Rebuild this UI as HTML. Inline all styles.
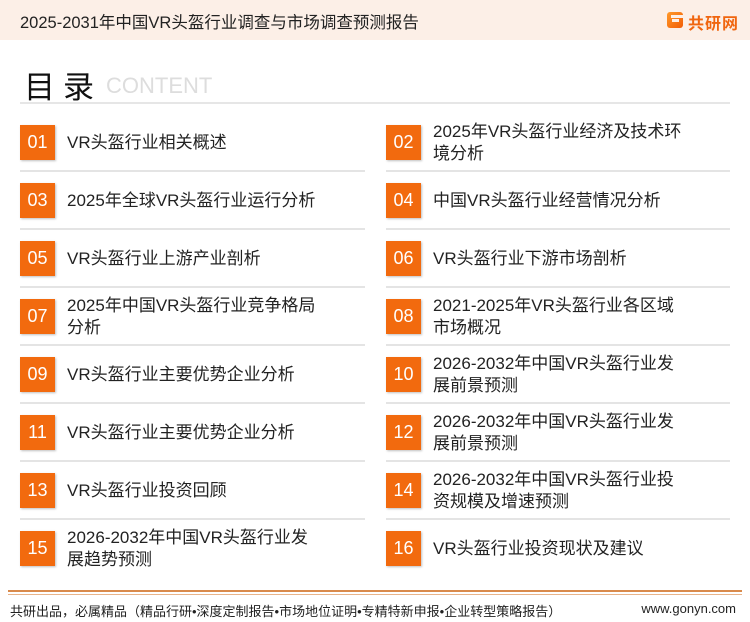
<!DOCTYPE html>
<html><head><meta charset="utf-8"><style>
*{margin:0;padding:0;box-sizing:border-box}
body{width:750px;height:622px;background:#fff;position:relative;overflow:hidden;font-family:"Liberation Sans","Noto Sans CJK SC",sans-serif;color:#222}
.hdr{position:absolute;left:0;top:0;width:750px;height:40px;background:#fcefe7}
.hdr .t{position:absolute;left:20px;top:9px;font-size:16.5px;color:#222}
.logo{position:absolute;left:667px;top:12px;width:16px;height:16px;border-radius:3px;background:linear-gradient(135deg,#ff9a2a,#f25c05)}
.logo:after{content:"";position:absolute;left:5px;top:7px;width:7px;height:3px;background:#fcefe7}
.logo:before{content:"";position:absolute;left:4px;top:3px;width:12px;height:3px;background:#fcefe7}
.lt{position:absolute;left:688px;top:10px;font-size:16px;font-weight:bold;color:#f0650f;letter-spacing:1px}
.ml{position:absolute;left:24px;top:62px;font-size:31px;color:#111;letter-spacing:8px}
.ct{position:absolute;left:106px;top:73px;font-size:22px;color:#ddd}
.hl{position:absolute;left:20px;top:102px;width:710px;height:2px;background:#e6e6e6}
.row{position:absolute;height:58px}
.box{position:absolute;left:0;top:22px;width:35px;height:35px;background:#f26a0e;color:#fff;font-size:18px;line-height:35px;text-align:center;box-shadow:1px 1px 2px rgba(0,0,0,.25)}
.txt{position:absolute;left:47px;font-size:17px;line-height:22px;color:#222;white-space:nowrap}
.dv{position:absolute;left:0;height:2px;background:#e4e4e4}
.f1{position:absolute;left:8px;top:590px;width:734px;height:2px;background:#d98a4c}
.f2{position:absolute;left:8px;top:594px;width:734px;height:1px;background:#e8b48a}
.ft{position:absolute;left:10px;top:601px;font-size:13px;color:#222}
.fu{position:absolute;right:14px;top:601px;font-size:13px;color:#222}
</style></head><body>
<div class="hdr"><div class="t">2025-2031年中国VR头盔行业调查与市场调查预测报告</div><div class="logo"></div><div class="lt">共研网</div></div>
<div class="ml">目录</div><div class="ct">CONTENT</div>
<div class="hl"></div>

<div class="row" style="left:20px;top:103px;width:345px"><div class="box">01</div><div class="txt" style="top:29px">VR头盔行业相关概述</div><div class="dv" style="width:345px;top:67px"></div></div>
<div class="row" style="left:386px;top:103px;width:344px"><div class="box">02</div><div class="txt" style="top:18px">2025年VR头盔行业经济及技术环<br>境分析</div><div class="dv" style="width:344px;top:67px"></div></div>

<div class="row" style="left:20px;top:161px;width:345px"><div class="box">03</div><div class="txt" style="top:29px">2025年全球VR头盔行业运行分析</div><div class="dv" style="width:345px;top:67px"></div></div>
<div class="row" style="left:386px;top:161px;width:344px"><div class="box">04</div><div class="txt" style="top:29px">中国VR头盔行业经营情况分析</div><div class="dv" style="width:344px;top:67px"></div></div>

<div class="row" style="left:20px;top:219px;width:345px"><div class="box">05</div><div class="txt" style="top:29px">VR头盔行业上游产业剖析</div><div class="dv" style="width:345px;top:67px"></div></div>
<div class="row" style="left:386px;top:219px;width:344px"><div class="box">06</div><div class="txt" style="top:29px">VR头盔行业下游市场剖析</div><div class="dv" style="width:344px;top:67px"></div></div>

<div class="row" style="left:20px;top:277px;width:345px"><div class="box">07</div><div class="txt" style="top:18px">2025年中国VR头盔行业竞争格局<br>分析</div><div class="dv" style="width:345px;top:67px"></div></div>
<div class="row" style="left:386px;top:277px;width:344px"><div class="box">08</div><div class="txt" style="top:18px">2021-2025年VR头盔行业各区域<br>市场概况</div><div class="dv" style="width:344px;top:67px"></div></div>

<div class="row" style="left:20px;top:335px;width:345px"><div class="box">09</div><div class="txt" style="top:29px">VR头盔行业主要优势企业分析</div><div class="dv" style="width:345px;top:67px"></div></div>
<div class="row" style="left:386px;top:335px;width:344px"><div class="box">10</div><div class="txt" style="top:18px">2026-2032年中国VR头盔行业发<br>展前景预测</div><div class="dv" style="width:344px;top:67px"></div></div>

<div class="row" style="left:20px;top:393px;width:345px"><div class="box">11</div><div class="txt" style="top:29px">VR头盔行业主要优势企业分析</div><div class="dv" style="width:345px;top:67px"></div></div>
<div class="row" style="left:386px;top:393px;width:344px"><div class="box">12</div><div class="txt" style="top:18px">2026-2032年中国VR头盔行业发<br>展前景预测</div><div class="dv" style="width:344px;top:67px"></div></div>

<div class="row" style="left:20px;top:451px;width:345px"><div class="box">13</div><div class="txt" style="top:29px">VR头盔行业投资回顾</div><div class="dv" style="width:345px;top:67px"></div></div>
<div class="row" style="left:386px;top:451px;width:344px"><div class="box">14</div><div class="txt" style="top:18px">2026-2032年中国VR头盔行业投<br>资规模及增速预测</div><div class="dv" style="width:344px;top:67px"></div></div>

<div class="row" style="left:20px;top:509px;width:345px"><div class="box">15</div><div class="txt" style="top:18px">2026-2032年中国VR头盔行业发<br>展趋势预测</div></div>
<div class="row" style="left:386px;top:509px;width:344px"><div class="box">16</div><div class="txt" style="top:29px">VR头盔行业投资现状及建议</div></div>

<div class="f1"></div><div class="f2"></div>
<div class="ft">共研出品，必属精品（精品行研•深度定制报告•市场地位证明•专精特新申报•企业转型策略报告）</div>
<div class="fu">www.gonyn.com</div>
</body></html>
